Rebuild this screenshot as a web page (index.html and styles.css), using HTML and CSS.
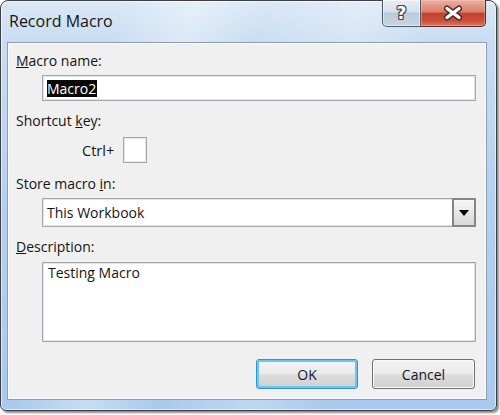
FILE: index.html
```html
<!DOCTYPE html>
<html>
<head>
<meta charset="utf-8">
<link rel="stylesheet" href="styles.css">
</head>
<body>
<div class="window">
  <div class="titlebar">
    <span class="title">Record Macro</span>
    <div class="caption">
      <div class="cap-btn help">?</div>
      <div class="cap-btn close">
        <svg width="24" height="16" viewBox="0 0 24 16">
          <path d="M6 3.5 L18 12.5 M18 3.5 L6 12.5" stroke="#4a2a26" stroke-width="6" stroke-linecap="round"/>
          <path d="M6 3.5 L18 12.5 M18 3.5 L6 12.5" stroke="#ffffff" stroke-width="3.4" stroke-linecap="round"/>
        </svg>
      </div>
    </div>
  </div>
  <div class="client">
    <div class="lbl"><u>M</u>acro name:</div>
    <div class="field name"><span class="sel">Macro2</span></div>
    <div class="lbl gap-l">Shortcut <u>k</u>ey:</div>
    <div class="shortcut"><span class="ctrl">Ctrl+</span><div class="keybox"></div></div>
    <div class="lbl gap-s">Store macro <u>i</u>n:</div>
    <div class="field combo"><span class="val">This Workbook</span><div class="drop"><svg width="10" height="6" viewBox="0 0 10 6"><path d="M0 0 H10 L5 6 Z" fill="#000"/></svg></div></div>
    <div class="lbl gap-l"><u>D</u>escription:</div>
    <div class="field desc">Testing Macro</div>
    <div class="buttons">
      <div class="btn ok">OK</div>
      <div class="btn cancel">Cancel</div>
    </div>
  </div>
</div>
</body>
</html>
```

FILE: styles.css
```css
html, body {
  margin: 0;
  padding: 0;
  background: #ffffff;
}
body {
  width: 500px;
  height: 415px;
  font-family: "Open Sans", "Noto Sans", sans-serif;
  color: #141414;
}
.window {
  box-sizing: border-box;
  width: 497px;
  height: 411px;
  border: 1px solid #3d3f44;
  border-radius: 8px 8px 6px 6px;
  background:
    linear-gradient(105deg, rgba(255,255,255,0) 20%, rgba(255,255,255,0.35) 32%, rgba(255,255,255,0) 44%, rgba(255,255,255,0.25) 60%, rgba(255,255,255,0) 72%),
    linear-gradient(to bottom, #dae8f6 0px, #c9ddf2 40px, #b4d0ef 200px, #a9caee 100%);
  box-shadow: inset 0 0 0 1px rgba(255,255,255,0.6), 2px 2px 2px rgba(0,0,0,0.45);
  display: flex;
  flex-direction: column;
}
.titlebar {
  height: 41px;
  display: flex;
  justify-content: space-between;
  align-items: flex-start;
}
.title {
  font-size: 16px;
  line-height: 20px;
  padding: 10px 0 0 8px;
  color: #141414;
}
.caption {
  display: flex;
  margin: -1px 10px 0 0;
}
.cap-btn {
  box-sizing: border-box;
  height: 27px;
  display: flex;
  align-items: center;
  justify-content: center;
}
.help {
  width: 39px;
  border: 1px solid #4f5966;
  border-top: none;
  border-radius: 0 0 0 5px;
  background: linear-gradient(to bottom, #e8eef5 0%, #d7e0ea 45%, #bccbdb 50%, #c7d4e2 100%);
  box-shadow: inset 0 0 0 1px rgba(255,255,255,0.5);
  color: #ffffff;
  font-weight: bold;
  font-size: 17px;
  font-family: "DejaVu Sans", sans-serif;
  text-shadow: -1px 0 #3f4852, 1px 0 #3f4852, 0 -1px #3f4852, 0 1px #3f4852, 1px 1px #3f4852, -1px -1px #3f4852, 1px -1px #3f4852, -1px 1px #3f4852;
}
.close {
  width: 65px;
  border: 1px solid #5a2820;
  border-top: none;
  border-left: none;
  border-radius: 0 0 5px 0;
  background: linear-gradient(to bottom, #eab0a3 0%, #dc7f6a 45%, #c5412a 52%, #c9503a 80%, #da7a62 100%);
  box-shadow: inset 0 0 0 1px rgba(255,220,210,0.35);
}
.client {
  flex: 1;
  margin: 0 9px 10px 6px;
  border: 1px solid #8e9db1;
  background: #f0f0f0;
  box-shadow: inset 0 0 0 1px #fafafa;
  padding: 9px 10px 10px 8px;
  display: flex;
  flex-direction: column;
}
.lbl {
  font-size: 14px;
  line-height: 18px;
  height: 18px;
}
.gap-l { margin-top: 11px; }
.gap-s { margin-top: 12px; }
.field {
  box-sizing: border-box;
  margin-left: 26px;
  background: #ffffff;
  border: 1px solid #a3a6ab;
  box-shadow: inset 0 0 0 1px #e2e3e5;
  font-size: 14px;
}
.name {
  margin-top: 5px;
  height: 26px;
  display: flex;
  align-items: center;
  padding-left: 4px;
}
.sel {
  background: #080808;
  color: #ffffff;
  line-height: 17px;
  padding: 0 1px 0 0;
}
.shortcut {
  margin-top: 7px;
  height: 26px;
  display: flex;
  align-items: center;
  font-size: 14.5px;
  padding-left: 66px;
}
.ctrl {
  width: 41px;
}
.keybox {
  box-sizing: border-box;
  width: 24px;
  height: 26px;
  background: #ffffff;
  border: 1px solid #a3a6ab;
  box-shadow: inset 0 0 0 1px #e6e7e9;
}
.combo {
  margin-top: 5px;
  height: 29px;
  display: flex;
  align-items: center;
  justify-content: space-between;
  padding-left: 4px;
}
.drop {
  box-sizing: border-box;
  width: 24px;
  height: 29px;
  margin-right: -1px;
  border: 2px solid #858585;
  background: linear-gradient(to bottom, #f6f6f6 0%, #e7e7e7 50%, #d9d9d9 100%);
  display: flex;
  align-items: center;
  justify-content: center;
}
.desc {
  margin-top: 6px;
  height: 80px;
  padding: 1px 5px;
  line-height: 18px;
}
.buttons {
  margin-top: 17px;
  display: flex;
  justify-content: flex-end;
  gap: 14px;
  padding-right: 1px;
}
.btn {
  box-sizing: border-box;
  height: 30px;
  border: 1px solid #707070;
  border-radius: 3px;
  background: linear-gradient(to bottom, #f3f3f3 0%, #ebebeb 48%, #dddddd 52%, #d0d0d0 100%);
  box-shadow: inset 0 0 0 1px #fbfbfb;
  display: flex;
  align-items: center;
  justify-content: center;
  font-size: 14px;
  color: #141428;
}
.ok {
  width: 102px;
  border-color: #3c8fcf;
  box-shadow: inset 0 0 0 2px #66c8f2;
}
.cancel {
  width: 103px;
}
```
